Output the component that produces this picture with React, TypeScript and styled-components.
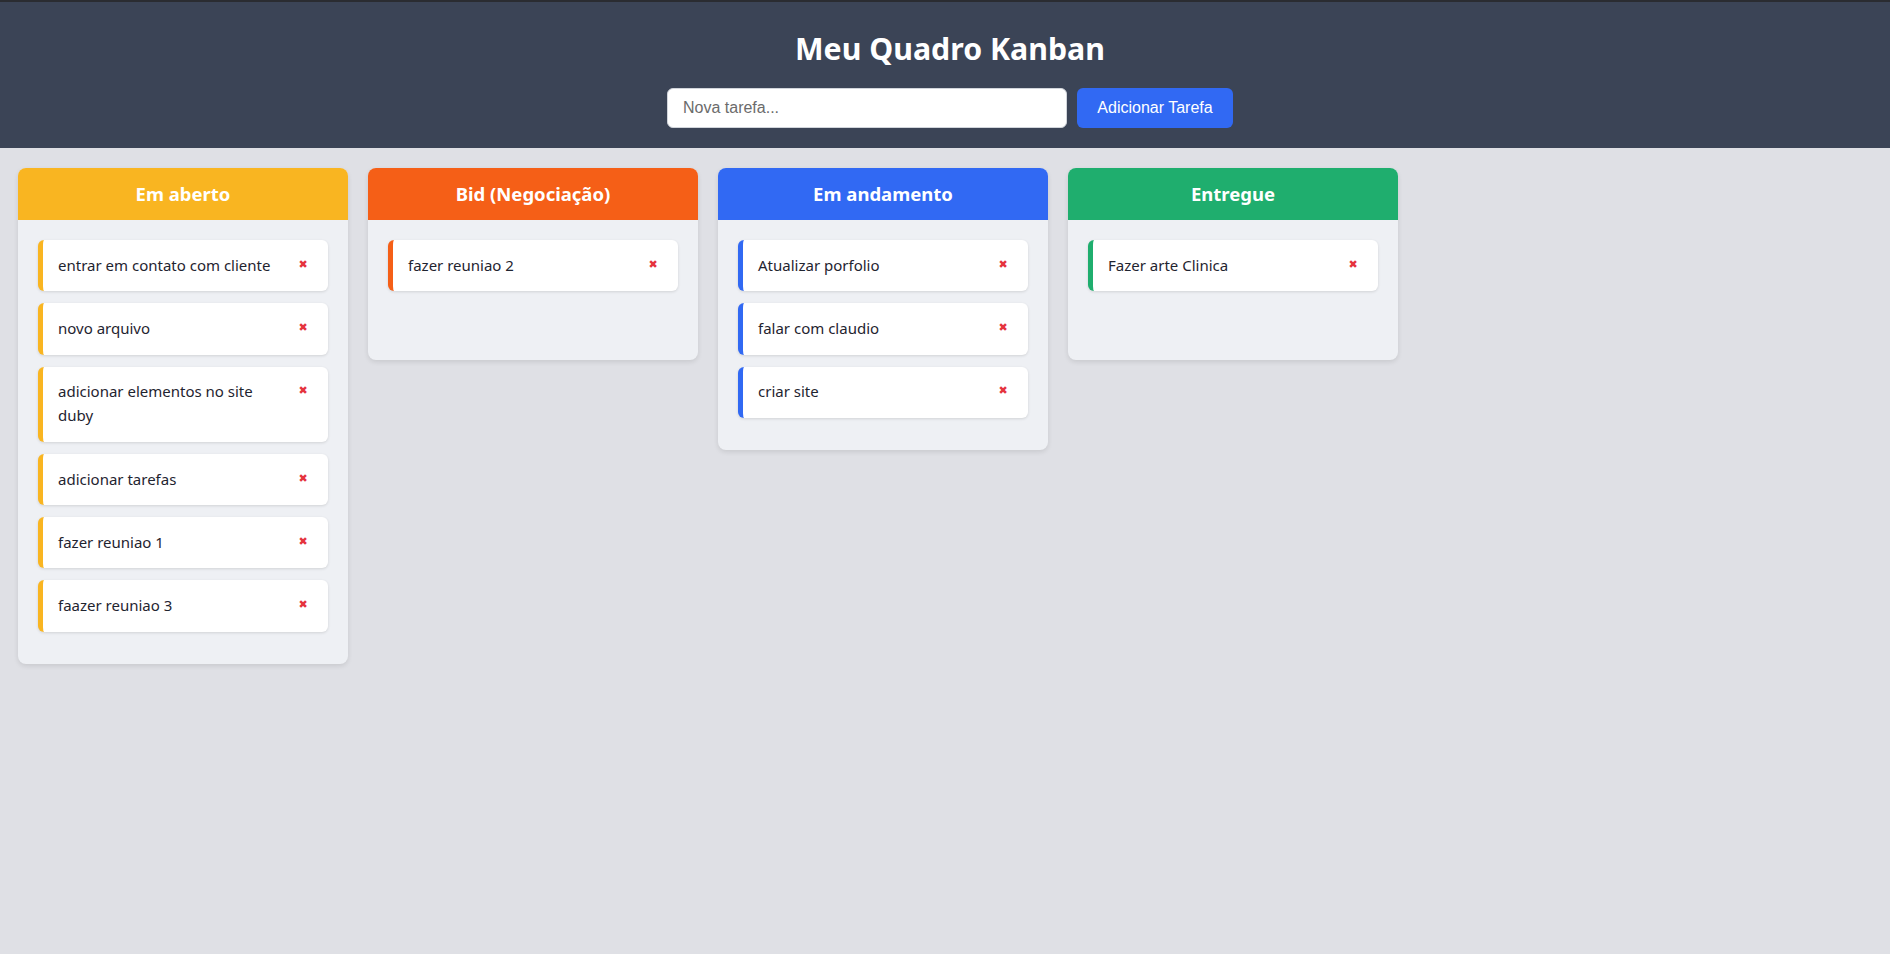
import React from "react";
import styled, { createGlobalStyle } from "styled-components";

const GlobalStyle = createGlobalStyle`
  html, body {
    margin: 0;
    padding: 0;
    background: #dfe0e5;
  }
  body {
    font-family: "Noto Sans", "Open Sans", sans-serif;
    min-height: 954px;
  }
  * { box-sizing: border-box; }
`;

const Page = styled.div`
  min-height: 954px;
  background: #dfe0e5;
`;

const Header = styled.header`
  background: #3b4456;
  border-top: 2px solid #2a2c31;
  padding: 30px 0 20px 10px;
  display: flex;
  flex-direction: column;
  align-items: center;
`;

const Title = styled.h1`
  margin: 0 0 22px;
  color: #ffffff;
  font-size: 30.3px;
  line-height: 34px;
  font-weight: 700;
`;

const Form = styled.form`
  display: flex;
  gap: 10px;
`;

const TaskInput = styled.input`
  width: 400px;
  height: 40px;
  padding: 0 15px;
  border: 1px solid #d1d5db;
  border-radius: 6px;
  font-family: "Liberation Sans", Arial, sans-serif;
  font-size: 16px;
  color: #222;
  outline: none;
  &::placeholder { color: #6b6b6b; }
`;

const AddButton = styled.button`
  width: 156px;
  height: 40px;
  border: none;
  border-radius: 6px;
  background: #3169f3;
  color: #ffffff;
  font-family: "Liberation Sans", Arial, sans-serif;
  font-size: 16px;
  cursor: pointer;
`;

const Board = styled.main`
  display: flex;
  align-items: flex-start;
  gap: 20px;
  padding: 20px 18px;
`;

const Column = styled.section`
  width: 330px;
  background: #eef0f4;
  border-radius: 8px;
  overflow: hidden;
  box-shadow: 0 2px 5px rgba(0, 0, 0, 0.1);
`;

const ColumnHeader = styled.h2<{ $color: string }>`
  margin: 0;
  height: 52px;
  padding-bottom: 1px;
  display: flex;
  align-items: center;
  justify-content: center;
  background: ${(p) => p.$color};
  color: #ffffff;
  font-size: 18.5px;
  font-weight: 700;
`;

const ColumnBody = styled.div`
  padding: 20px;
  min-height: 140px;
`;

const Card = styled.div<{ $color: string }>`
  display: flex;
  justify-content: space-between;
  align-items: flex-start;
  gap: 10px;
  background: #ffffff;
  border-left: 5px solid ${(p) => p.$color};
  border-radius: 6px;
  padding: 12.75px 15px 14.5px 15px;
  margin-bottom: 12px;
  box-shadow: 0 1px 3px rgba(0, 0, 0, 0.12);
`;

const CardText = styled.span`
  font-size: 15px;
  line-height: 24px;
  color: #1f2430;
`;

const DeleteButton = styled.button`
  flex: none;
  width: 20px;
  height: 24px;
  padding: 0;
  border: none;
  background: none;
  color: #e5343d;
  font-family: "DejaVu Sans", sans-serif;
  font-size: 11px;
  line-height: 24px;
  cursor: pointer;
`;

type Col = { title: string; color: string; tasks: string[] };

const columns: Col[] = [
  {
    title: "Em aberto",
    color: "#f9b521",
    tasks: [
      "entrar em contato com cliente",
      "novo arquivo",
      "adicionar elementos no site duby",
      "adicionar tarefas",
      "fazer reuniao 1",
      "faazer reuniao 3",
    ],
  },
  { title: "Bid (Negociação)", color: "#f55f17", tasks: ["fazer reuniao 2"] },
  {
    title: "Em andamento",
    color: "#3169f3",
    tasks: ["Atualizar porfolio", "falar com claudio", "criar site"],
  },
  { title: "Entregue", color: "#1fae6e", tasks: ["Fazer arte Clinica"] },
];

export default function App() {
  return (
    <Page>
      <GlobalStyle />
      <Header>
        <Title>Meu Quadro Kanban</Title>
        <Form onSubmit={(e) => e.preventDefault()}>
          <TaskInput placeholder="Nova tarefa..." />
          <AddButton type="submit">Adicionar Tarefa</AddButton>
        </Form>
      </Header>
      <Board>
        {columns.map((c) => (
          <Column key={c.title}>
            <ColumnHeader $color={c.color}>{c.title}</ColumnHeader>
            <ColumnBody>
              {c.tasks.map((t) => (
                <Card key={t} $color={c.color}>
                  <CardText>{t}</CardText>
                  <DeleteButton>✖</DeleteButton>
                </Card>
              ))}
            </ColumnBody>
          </Column>
        ))}
      </Board>
    </Page>
  );
}
